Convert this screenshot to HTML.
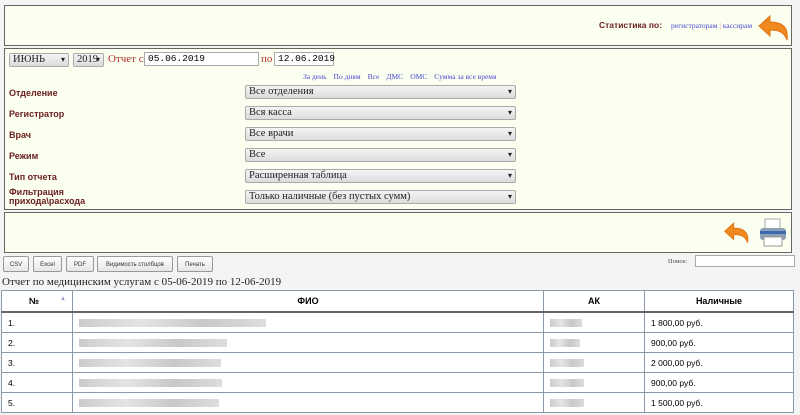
<!DOCTYPE html>
<html><head><meta charset="utf-8"><style>
body{margin:0;width:800px;height:415px;overflow:hidden;background:#f4f4f4;font-family:"Liberation Sans",sans-serif;position:relative}
.a{position:absolute}
.box{position:absolute;left:4px;width:786px;border:1px solid #666;background:#fbfff0}
.lbl{position:absolute;left:9px;font-size:9px;font-weight:bold;color:#6b2020}
.sel{position:absolute;left:245px;width:271px;height:14px;border:1px solid #aaa;border-radius:2px;background:linear-gradient(#f4f4f4,#dcdcdc);font-family:"Liberation Serif",serif;font-size:10.5px;color:#222;box-sizing:border-box;padding-left:3px;line-height:12px}
.sel:after{content:"▾";position:absolute;right:3px;top:0;font-size:8px}
.inp{position:absolute;height:14px;border:1px solid #aaa;background:#fff;box-sizing:border-box;font-family:"Liberation Mono",monospace;font-size:9.5px;line-height:12px;padding-left:3px}
.lnk{color:#4a4ad0;font-family:"Liberation Serif",serif;font-size:7.5px;white-space:nowrap}
.lnk span{margin-right:7px}
.btn{position:absolute;top:256px;height:16px;border:1px solid #999;border-radius:2px;background:linear-gradient(#fff,#e6e6e6);font-size:6px;line-height:16px;text-align:center;color:#333;box-sizing:border-box}
table{position:absolute;left:1px;top:290px;width:793px;border-collapse:collapse;background:#fff;font-size:8.5px}
td,th{border:1px solid #8a9aa8;padding:0 6px;height:19px}
th{background:#fff;font-size:9px;text-align:center;height:20px;border-bottom:2px solid #666}
.bl{display:inline-block;height:8px;background:linear-gradient(90deg,#ccc,#e4e4e4,#c8c8c8,#ddd);vertical-align:middle}
</style></head><body>
<div class="box" style="top:5px;height:39px">
<div class="a" style="left:594px;top:14px;font-size:8.5px;font-weight:bold;color:#6b2020">Статистика по:</div>
<div class="a lnk" style="left:666px;top:15px">регистраторам <b style="color:#c88;font-weight:normal">|</b> кассирам</div>
<svg class="a" style="left:752px;top:8px" width="34" height="28" viewBox="0 0 34 28"><path d="M2 12 L13 2 L13 8 C24 8 32 12 30 26 C27 18 22 16 13 16 L13 22 Z" fill="#f08a20" stroke="#e07010" stroke-width="1"/></svg>
</div>
<div class="box" style="top:48px;height:160px">
<div class="sel" style="left:4px;top:4px;width:60px;height:14px">ИЮНЬ</div>
<div class="sel" style="left:68px;top:4px;width:31px;height:14px">2019</div>
<div class="a" style="left:103px;top:4px;font-family:'Liberation Serif',serif;font-size:11px;color:#b03030">Отчет с</div>
<div class="inp" style="left:139px;top:3px;width:115px">05.06.2019</div>
<div class="a" style="left:256px;top:4px;font-family:'Liberation Serif',serif;font-size:11px;color:#b03030">по</div>
<div class="inp" style="left:269px;top:3px;width:60px">12.06.2019</div>
<div class="a lnk" style="left:298px;top:23px"><span>За день</span><span>По дням</span><span>Все</span><span>ДМС</span><span>ОМС</span><span>Сумма за все время</span></div>
</div>
<div class="lbl" style="top:88px">Отделение</div><div class="sel" style="top:85px">Все отделения</div>
<div class="lbl" style="top:109px">Регистратор</div><div class="sel" style="top:106px">Вся касса</div>
<div class="lbl" style="top:130px">Врач</div><div class="sel" style="top:127px">Все врачи</div>
<div class="lbl" style="top:151px">Режим</div><div class="sel" style="top:148px">Все</div>
<div class="lbl" style="top:172px">Тип отчета</div><div class="sel" style="top:169px">Расширенная таблица</div>
<div class="lbl" style="top:188px;line-height:9px">Фильтрация<br>прихода\расхода</div><div class="sel" style="top:190px">Только наличные (без пустых сумм)</div>
<div class="box" style="top:212px;height:39px">
<svg class="a" style="left:718px;top:7px" width="28" height="26" viewBox="0 0 34 28"><path d="M2 12 L13 2 L13 8 C24 8 32 12 30 26 C27 18 22 16 13 16 L13 22 Z" fill="#f08a20" stroke="#e07010"/></svg>
<svg class="a" style="left:754px;top:5px" width="28" height="30" viewBox="0 0 28 30"><rect x="6" y="1" width="15" height="10" fill="#fff" stroke="#aaa"/><rect x="1" y="10" width="26" height="12" rx="3" fill="#8fa0b4"/><rect x="1" y="13" width="26" height="3" fill="#3a6ab0"/><rect x="5" y="19" width="18" height="9" fill="#fff" stroke="#999"/></svg>
</div>
<div class="btn" style="left:3px;width:26px">CSV</div>
<div class="btn" style="left:33px;width:29px">Excel</div>
<div class="btn" style="left:66px;width:28px">PDF</div>
<div class="btn" style="left:97px;width:76px">Видимость столбцов</div>
<div class="btn" style="left:177px;width:36px">Печать</div>
<div class="a" style="left:668px;top:258px;font-family:'Liberation Serif',serif;font-size:6.5px;color:#444">Поиск:</div>
<div class="inp" style="left:695px;top:255px;width:100px;height:12px"></div>
<div class="a" style="left:2px;top:276px;font-family:'Liberation Serif',serif;font-size:11px;color:#222">Отчет по медицинским услугам с 05-06-2019 по 12-06-2019</div>
<table>
<tr><th style="width:58px">№ <span style="float:right;color:#99c;font-size:6px">▲</span></th><th>ФИО</th><th style="width:88px">АК</th><th style="width:136px">Наличные</th></tr>
<tr><td>1.</td><td><span class="bl" style="width:187px"></span></td><td><span class="bl" style="width:32px"></span></td><td>1 800,00 руб.</td></tr>
<tr><td>2.</td><td><span class="bl" style="width:148px"></span></td><td><span class="bl" style="width:30px"></span></td><td>900,00 руб.</td></tr>
<tr><td>3.</td><td><span class="bl" style="width:142px"></span></td><td><span class="bl" style="width:34px"></span></td><td>2 000,00 руб.</td></tr>
<tr><td>4.</td><td><span class="bl" style="width:143px"></span></td><td><span class="bl" style="width:34px"></span></td><td>900,00 руб.</td></tr>
<tr><td>5.</td><td><span class="bl" style="width:140px"></span></td><td><span class="bl" style="width:34px"></span></td><td>1 500,00 руб.</td></tr>
</table>
</body></html>
